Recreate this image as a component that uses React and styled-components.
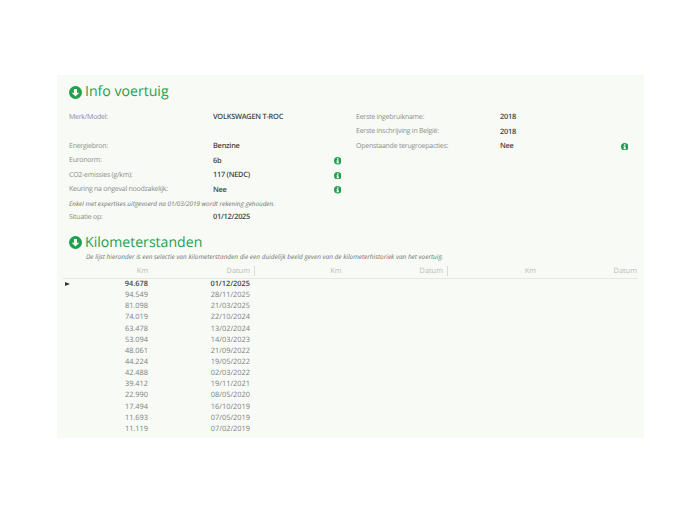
import React from "react";
import styled, { createGlobalStyle } from "styled-components";

const GlobalStyle = createGlobalStyle`
  html, body {
    margin: 0;
    background: #ffffff;
    font-family: "Open Sans", "Noto Sans", sans-serif;
    text-rendering: geometricPrecision;
  }
`;

const Page = styled.div`
  width: 685px;
  height: 513px;
  padding: 75px 41px 0 57px;
  box-sizing: border-box;
`;

const Panel = styled.div`
  height: 363px;
  background: #f8faf6;
  padding: 8px 6px 0 6px;
  box-sizing: border-box;
`;

const Heading = styled.h2`
  display: flex;
  align-items: center;
  gap: 3px;
  margin: 0 0 0 6px;
  height: 18px;
  font-size: 14.1px;
  line-height: 18px;
  font-weight: 500;
  color: #1fa04f;
`;

const InfoGrid = styled.div`
  display: grid;
  grid-template-columns: 287px 288px;
  margin: 9px 0 0 6px;
`;

const Column = styled.div`
  display: flex;
  flex-direction: column;
`;

const Row = styled.div`
  display: grid;
  grid-template-columns: 144px 118px 13px;
  align-items: center;
  height: 14.5px;
  font-size: 7px;
  letter-spacing: -0.25px;
  color: #8b8f8b;
`;

const Value = styled.span`
  font-size: 7.4px;
  letter-spacing: -0.25px;
  font-weight: 600;
  color: #444744;
`;

const Note = styled.div`
  height: 13px;
  line-height: 13px;
  font-size: 6.35px;
  font-style: italic;
  color: #6f736f;
`;

const Sub = styled.div`
  margin: 0 0 0 23px;
  font-size: 6.45px;
  line-height: 10px;
  font-style: italic;
  color: #6f736f;
`;

const SectionHead = styled(Heading)`
  margin-top: 9px;
`;

const Table = styled.div`
  margin: 3px 0 0 0;
  width: 575px;
`;

const HeadRow = styled.div`
  display: grid;
  grid-template-columns: 85px 102px 3.5px 2.5px 85.5px 101.5px 4px 2px 87px 101px;
  height: 13px;
  align-items: center;
  border-bottom: 1px solid #e6e8e4;
  font-size: 7.4px;
  color: #b9bcb9;
  text-align: right;
`;

const Sep = styled.span`
  height: 10px;
  border-left: 1px solid #d9dbd7;
`;

const DataRow = styled.div`
  display: grid;
  grid-template-columns: 85px 102px;
  align-items: center;
  height: 11.15px;
  position: relative;
  font-size: 7.4px;
  text-align: right;
  color: ${(p) => (p.$current ? "#3f423f" : "#7d817d")};
  font-weight: ${(p) => (p.$current ? 600 : 400)};
`;

const Pointer = styled.span`
  position: absolute;
  left: 2px;
  top: 3px;
  width: 0;
  height: 0;
  border-left: 5px solid #333;
  border-top: 2.5px solid transparent;
  border-bottom: 2.5px solid transparent;
`;

const CircleDown = ({ size }) => (
  <svg width={size} height={size} viewBox="0 0 24 24">
    <circle cx="12" cy="12" r="12" fill="#1fa04f" />
    <path d="M12 19.5 5 12.5h4.2V5.5h5.6v7H19z" fill="#f8faf6" />
  </svg>
);

const InfoIcon = () => (
  <svg width="7.5" height="7.5" viewBox="0 0 24 24" style={{ justifySelf: "center" }}>
    <circle cx="12" cy="12" r="12" fill="#1fa04f" />
    <rect x="9.5" y="4" width="5" height="4.5" fill="#f8faf6" />
    <path d="M8 10.5h6.5V17H16v3H8v-3h1.5v-3.5H8z" fill="#f8faf6" />
  </svg>
);

const left = [
  ["Merk/Model:", "VOLKSWAGEN T-ROC"],
  ["", ""],
  ["Energiebron:", "Benzine"],
  ["Euronorm:", "6b", true],
  ["CO2-emissies (g/km):", "117 (NEDC)", true],
  ["Keuring na ongeval noodzakelijk:", "Nee", true],
];

const right = [
  ["Eerste ingebruikname:", "2018"],
  ["Eerste inschrijving in België:", "2018"],
  ["Openstaande terugroepacties:", "Nee", true],
];

const readings = [
  ["94.678", "01/12/2025"],
  ["94.549", "28/11/2025"],
  ["81.098", "21/03/2025"],
  ["74.019", "22/10/2024"],
  ["63.478", "13/02/2024"],
  ["53.094", "14/03/2023"],
  ["48.061", "21/09/2022"],
  ["44.224", "19/05/2022"],
  ["42.488", "02/03/2022"],
  ["39.412", "19/11/2021"],
  ["22.990", "08/05/2020"],
  ["17.494", "16/10/2019"],
  ["11.693", "07/05/2019"],
  ["11.119", "07/02/2019"],
];

const InfoRow = ({ label, value, info }) => (
  <Row>
    <span>{label}</span>
    <Value>{value}</Value>
    {info ? <InfoIcon /> : <span />}
  </Row>
);

const App = () => {
  return (
    <Page>
      <GlobalStyle />
      <Panel>
        <Heading>
          <CircleDown size={13} />
          Info voertuig
        </Heading>
        <InfoGrid>
          <Column>
            {left.map(([l, v, i], n) => (
              <InfoRow key={n} label={l} value={v} info={i} />
            ))}
            <Note>Enkel met expertises uitgevoerd na 01/03/2019 wordt rekening gehouden.</Note>
            <InfoRow label="Situatie op:" value="01/12/2025" />
          </Column>
          <Column>
            {right.map(([l, v, i], n) => (
              <InfoRow key={n} label={l} value={v} info={i} />
            ))}
          </Column>
        </InfoGrid>
        <SectionHead>
          <CircleDown size={13} />
          Kilometerstanden
        </SectionHead>
        <Sub>
          De lijst hieronder is een selectie van kilometerstanden die een duidelijk beeld geven van de kilometerhistoriek van het voertuig.
        </Sub>
        <Table>
          <HeadRow>
            <span>Km</span>
            <span>Datum</span>
            <span />
            <Sep />
            <span>Km</span>
            <span>Datum</span>
            <span />
            <Sep />
            <span>Km</span>
            <span>Datum</span>
          </HeadRow>
          <div>
            {readings.map(([km, date], n) => (
              <DataRow key={date} $current={n === 0}>
                {n === 0 && <Pointer />}
                <span>{km}</span>
                <span>{date}</span>
              </DataRow>
            ))}
          </div>
        </Table>
      </Panel>
    </Page>
  );
};

export default App;
